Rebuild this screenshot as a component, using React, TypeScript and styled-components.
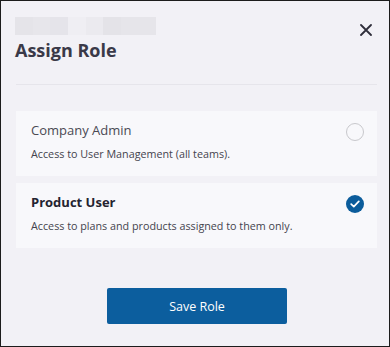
import React, { useState } from "react";
import styled, { createGlobalStyle } from "styled-components";

const GlobalStyle = createGlobalStyle`
  html, body {
    margin: 0;
    padding: 0;
    background: #f2f1f6;
  }
  * {
    box-sizing: border-box;
  }
`;

const Modal = styled.div`
  width: 390px;
  height: 347px;
  border: 1px solid #1c1c1c;
  background: #f2f1f6;
  padding: 16px 12px 0 14px;
  font-family: "Open Sans", "Noto Sans", sans-serif;
  color: #3c3b47;
  display: flex;
  flex-direction: column;
`;

const Header = styled.div`
  display: flex;
  justify-content: space-between;
  align-items: flex-start;
`;

const Crumbs = styled.div`
  display: flex;
  height: 18px;
  margin-bottom: 2px;
`;

const Crumb = styled.span<{ $w: number; $tone: string }>`
  display: block;
  width: ${(p) => p.$w}px;
  height: 100%;
  background: ${(p) => p.$tone};
`;

const Title = styled.h2`
  margin: 0;
  font-size: 18px;
  line-height: 26px;
  font-weight: 700;
  color: #3a3948;
`;

const CloseButton = styled.button`
  border: none;
  background: transparent;
  padding: 0;
  margin: 6px 4px 0 0;
  width: 14px;
  height: 14px;
  display: flex;
  align-items: center;
  justify-content: center;
  cursor: pointer;
  color: #2f2e3a;
`;

const Divider = styled.hr`
  border: none;
  height: 1px;
  background: #e6e5eb;
  margin: 21px 0 26px 1px;
`;

const Options = styled.div`
  display: flex;
  flex-direction: column;
  gap: 7px;
  padding-left: 1px;
`;

const Option = styled.label`
  height: 65px;
  background: #f8f8fb;
  padding: 9px 13px 0 15px;
  display: flex;
  justify-content: space-between;
  cursor: pointer;
`;

const OptionText = styled.div`
  display: flex;
  flex-direction: column;
`;

const OptionName = styled.div<{ $active: boolean }>`
  font-size: 13px;
  line-height: 20px;
  font-weight: ${(p) => (p.$active ? 700 : 400)};
  color: ${(p) => (p.$active ? "#242330" : "#4a4953")};
`;

const OptionDesc = styled.div`
  font-size: 10.75px;
  line-height: 16px;
  margin-top: 6px;
  color: #44434d;
`;

const Radio = styled.span<{ $checked: boolean }>`
  width: 18px;
  height: 18px;
  margin-top: 3px;
  border-radius: 50%;
  flex-shrink: 0;
  display: flex;
  align-items: center;
  justify-content: center;
  border: ${(p) => (p.$checked ? "none" : "1.5px solid #c8c8cc")};
  background: ${(p) => (p.$checked ? "#0b5c9b" : "transparent")};
`;

const Footer = styled.div`
  display: flex;
  justify-content: center;
  margin-top: 40px;
`;

const SaveButton = styled.button`
  width: 180px;
  height: 36px;
  border: none;
  border-radius: 2px;
  background: #0c5e9e;
  color: #ffffff;
  font-family: "Open Sans", "Noto Sans", sans-serif;
  font-size: 12.5px;
  cursor: pointer;
  margin-left: 2px;
`;

const roles = [
  { id: "admin", name: "Company Admin", desc: "Access to User Management (all teams)." },
  { id: "product", name: "Product User", desc: "Access to plans and products assigned to them only." },
];

const App = () => {
  const [selected, setSelected] = useState("product");

  return (
    <>
      <GlobalStyle />
      <Modal>
        <Header>
          <div>
            <Crumbs>
              <Crumb $w={18} $tone="#e5e4e9" />
              <Crumb $w={17} $tone="#e7e6eb" />
              <Crumb $w={18} $tone="#e5e4ea" />
              <Crumb $w={18} $tone="#efeef3" />
              <Crumb $w={17} $tone="#ebeaef" />
              <Crumb $w={18} $tone="#e4e3e8" />
              <Crumb $w={35} $tone="#e6e5ea" />
            </Crumbs>
            <Title>Assign Role</Title>
          </div>
          <CloseButton aria-label="Close">
            <svg width="12" height="12" viewBox="0 0 12 12">
              <path d="M1 1 L11 11 M11 1 L1 11" stroke="currentColor" strokeWidth="1.8" strokeLinecap="round" />
            </svg>
          </CloseButton>
        </Header>
        <Divider />
        <Options>
          {roles.map((role) => {
            const active = selected === role.id;
            return (
              <Option key={role.id} onClick={() => setSelected(role.id)}>
                <OptionText>
                  <OptionName $active={active}>{role.name}</OptionName>
                  <OptionDesc>{role.desc}</OptionDesc>
                </OptionText>
                <Radio $checked={active}>
                  {active && (
                    <svg width="10" height="8" viewBox="0 0 10 8">
                      <path d="M1.2 4.2 L3.8 6.6 L8.8 1.4" fill="none" stroke="#fff" strokeWidth="1.7" strokeLinecap="round" strokeLinejoin="round" />
                    </svg>
                  )}
                </Radio>
              </Option>
            );
          })}
        </Options>
        <Footer>
          <SaveButton>Save Role</SaveButton>
        </Footer>
      </Modal>
    </>
  );
};

export default App;
